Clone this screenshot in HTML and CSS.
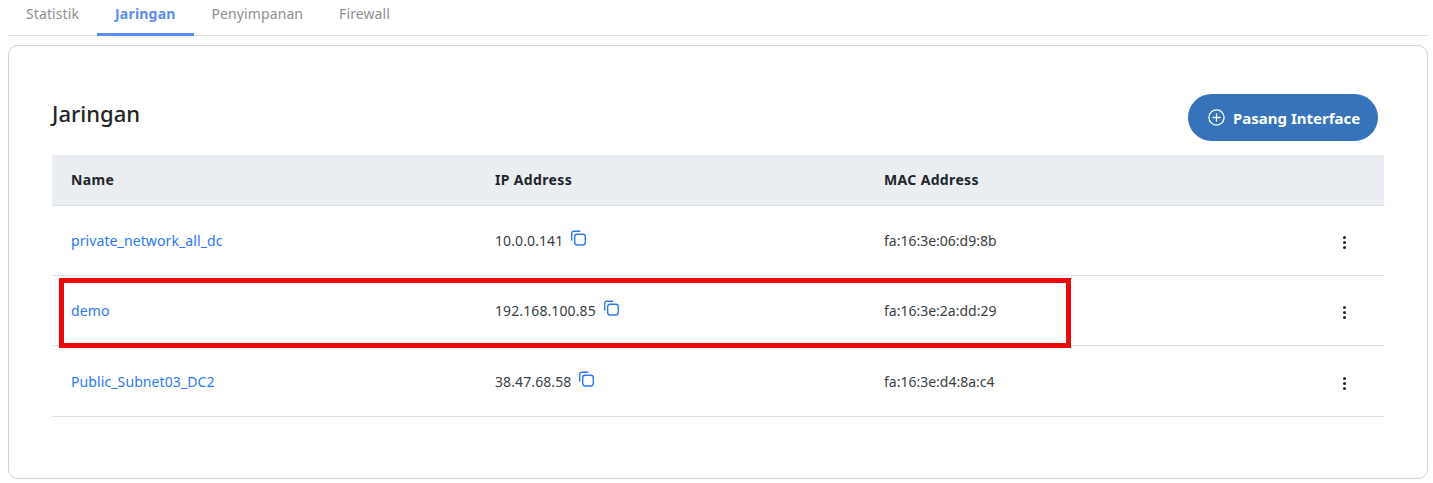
FILE: index.html
```html
<!DOCTYPE html>
<html lang="id">
<head>
    <meta charset="UTF-8">
    <meta name="viewport" content="width=device-width, initial-scale=1.0">
    <title>Jaringan</title>
    <link rel="stylesheet" href="styles.css">
</head>
<body>
    <div class="container">
        <div class="tabs">
            <a class="tab">Statistik</a>
            <a class="tab active">Jaringan</a>
            <a class="tab">Penyimpanan</a>
            <a class="tab">Firewall</a>
        </div>

        <div class="card">
            <div class="card-header">
                <h2>Jaringan</h2>
                <button class="add-btn">
                    <svg width="17" height="17" viewBox="0 0 17 17" fill="none" stroke="currentColor" stroke-width="1.3" stroke-linecap="round">
                        <circle cx="8.5" cy="8.5" r="7.6"/>
                        <path d="M8.5 5v7M5 8.5h7"/>
                    </svg>
                    Pasang Interface
                </button>
            </div>

            <table class="net-table">
                <colgroup>
                    <col class="col-name">
                    <col class="col-ip">
                    <col class="col-mac">
                    <col>
                </colgroup>
                <thead>
                    <tr>
                        <th>Name</th>
                        <th>IP Address</th>
                        <th>MAC Address</th>
                        <th></th>
                    </tr>
                </thead>
                <tbody>
                    <tr>
                        <td><a class="net-link">private_network_all_dc</a></td>
                        <td>
                            <div class="ip-cell">
                                <span class="ip">10.0.0.141</span>
                                <svg class="copy" width="17" height="17" viewBox="0 0 17 17" fill="none" stroke="currentColor" stroke-width="1.4">
                                    <rect x="4.7" y="4.2" width="10.6" height="10.8" rx="2.4"/>
                                    <path d="M1.7 10.5V3.4a2.2 2.2 0 0 1 2.2-2.2h6.4"/>
                                </svg>
                            </div>
                        </td>
                        <td>fa:16:3e:06:d9:8b</td>
                        <td class="actions"><span class="dots"><i></i><i></i><i></i></span></td>
                    </tr>
                    <tr>
                        <td><a class="net-link">demo</a></td>
                        <td>
                            <div class="ip-cell">
                                <span class="ip">192.168.100.85</span>
                                <svg class="copy" width="17" height="17" viewBox="0 0 17 17" fill="none" stroke="currentColor" stroke-width="1.4">
                                    <rect x="4.7" y="4.2" width="10.6" height="10.8" rx="2.4"/>
                                    <path d="M1.7 10.5V3.4a2.2 2.2 0 0 1 2.2-2.2h6.4"/>
                                </svg>
                            </div>
                        </td>
                        <td>fa:16:3e:2a:dd:29</td>
                        <td class="actions"><span class="dots"><i></i><i></i><i></i></span></td>
                    </tr>
                    <tr class="last-row">
                        <td><a class="net-link">Public_Subnet03_DC2</a></td>
                        <td>
                            <div class="ip-cell">
                                <span class="ip">38.47.68.58</span>
                                <svg class="copy" width="17" height="17" viewBox="0 0 17 17" fill="none" stroke="currentColor" stroke-width="1.4">
                                    <rect x="4.7" y="4.2" width="10.6" height="10.8" rx="2.4"/>
                                    <path d="M1.7 10.5V3.4a2.2 2.2 0 0 1 2.2-2.2h6.4"/>
                                </svg>
                            </div>
                        </td>
                        <td>fa:16:3e:d4:8a:c4</td>
                        <td class="actions"><span class="dots"><i></i><i></i><i></i></span></td>
                    </tr>
                </tbody>
            </table>

            <div class="highlight"></div>
        </div>
    </div>
</body>
</html>
```

FILE: styles.css
```css
* {
    box-sizing: border-box;
}

body {
    margin: 0;
    background-color: #fff;
    font-family: "Noto Sans", Inter, sans-serif;
    color: #212529;
}

.container {
    padding: 0 5px 0 8px;
}

.tabs {
    display: flex;
    height: 36px;
    border-bottom: 1px solid #e2e2e2;
}

.tab {
    height: 36px;
    padding: 4px 18px 0;
    font-size: 14px;
    line-height: 19px;
    letter-spacing: 0.1px;
    color: #8f8f8f;
}

.tab.active {
    color: #5b8def;
    font-weight: 700;
    letter-spacing: 0.2px;
    border-bottom: 3px solid #5b8def;
}

.card {
    position: relative;
    height: 434px;
    margin-top: 9px;
    padding: 48px 43px 0;
    border: 1px solid #d4d4d4;
    border-radius: 10px;
}

.card-header {
    display: flex;
    justify-content: space-between;
    align-items: center;
    height: 47px;
    margin-bottom: 14px;
    padding-right: 6px;
}

.card-header h2 {
    margin: 0 0 10px;
    font-size: 22px;
    font-weight: 500;
}

.add-btn {
    display: flex;
    align-items: center;
    gap: 8px;
    width: 190px;
    height: 47px;
    padding: 0 0 0 20px;
    border: none;
    border-radius: 24px;
    background-color: #3673ba;
    color: #fff;
    font-family: inherit;
    font-size: 15px;
    font-weight: 700;
}

.net-table {
    width: 1332px;
    table-layout: fixed;
    border-collapse: collapse;
    font-size: 14px;
}

.col-name {
    width: 424px;
}

.col-ip {
    width: 389px;
}

.col-mac {
    width: 400px;
}

.net-table th {
    height: 50px;
    padding: 0 19px;
    text-align: left;
    font-weight: 700;
    letter-spacing: 0.35px;
    background-color: #eaedf1;
    border-bottom: 1px solid #dcdfe4;
}

.net-table td {
    height: 70px;
    padding: 0 19px;
    color: #3a3f45;
    border-bottom: 1px solid #e1e2e6;
}

.net-table .last-row td {
    height: 71px;
    padding-top: 1px;
}

.net-link {
    letter-spacing: 0.1px;
    color: #2b78f5;
}

.ip-cell {
    display: flex;
    align-items: center;
    gap: 7px;
}

.ip {
    letter-spacing: 0.1px;
}

.copy {
    margin-bottom: 3px;
    color: #2b78f5;
}

.actions {
    text-align: right;
}

.dots {
    display: inline-flex;
    flex-direction: column;
    gap: 2px;
    margin: 2px 19px 0 0;
    vertical-align: middle;
}

.dots i {
    width: 3px;
    height: 3px;
    border-radius: 50%;
    background-color: #212529;
}

.highlight {
    position: absolute;
    left: 50px;
    top: 232px;
    width: 1012px;
    height: 70px;
    border: 5px solid #ea0a0a;
}
```
